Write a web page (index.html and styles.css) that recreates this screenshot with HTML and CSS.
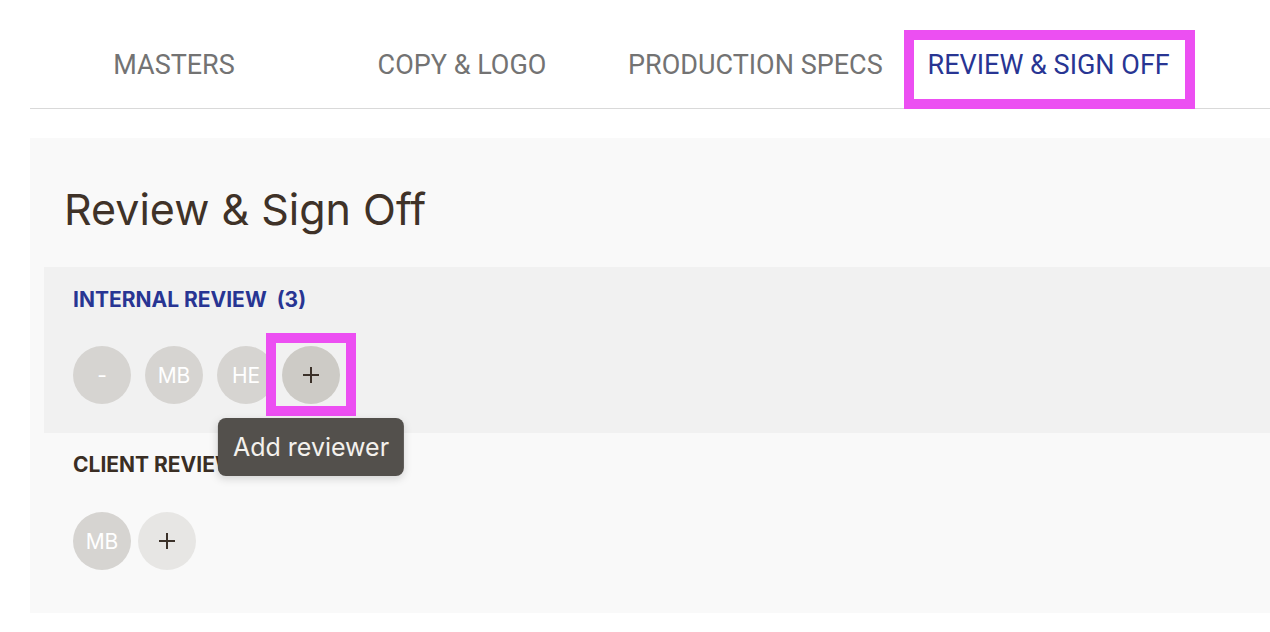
FILE: index.html
```html
<!DOCTYPE html>
<html lang="en">
<head>
<meta charset="utf-8">
<title>Review &amp; Sign Off</title>
<link rel="stylesheet" href="styles.css">
</head>
<body>
<div class="page">
  <nav class="tabs">
    <div class="tab">MASTERS</div>
    <div class="tab">COPY &amp; LOGO</div>
    <div class="tab">PRODUCTION SPECS</div>
    <div class="tab tab-active">REVIEW &amp; SIGN OFF<span class="highlight highlight-tab"></span></div>
  </nav>

  <main class="panel">
    <h1 class="title">Review &amp; Sign Off</h1>

    <section class="review review-internal">
      <h2 class="label label-blue">INTERNAL REVIEW<span class="count">(3)</span></h2>
      <div class="people">
        <div class="avatars">
          <div class="avatar">-</div>
          <div class="avatar">MB</div>
          <div class="avatar">HE</div>
        </div>
        <div class="add add-hover">
          <svg class="plus" viewBox="0 0 18 18" width="18" height="18"><path d="M9 1v16M1 9h16" stroke="#3b3129" stroke-width="2" fill="none"/></svg>
          <span class="highlight highlight-add"></span>
          <div class="tooltip">Add reviewer</div>
        </div>
      </div>
    </section>

    <section class="review review-client">
      <h2 class="label label-dark">CLIENT REVIEW</h2>
      <div class="people">
        <div class="avatars">
          <div class="avatar">MB</div>
        </div>
        <div class="add">
          <svg class="plus" viewBox="0 0 18 18" width="18" height="18"><path d="M9 1v16M1 9h16" stroke="#3b3129" stroke-width="2" fill="none"/></svg>
        </div>
      </div>
    </section>
  </main>
</div>
</body>
</html>
```

FILE: styles.css
```css
* { box-sizing: border-box; }

html, body {
  margin: 0;
  padding: 0;
  background: #ffffff;
  overflow: hidden;
}

.page {
  margin-left: 30px;
  width: calc(100% - 30px);
}

.tabs {
  display: flex;
  padding-top: 30px;
  border-bottom: 1px solid #d9d9d9;
  height: 109px;
}

.tab {
  position: relative;
  min-width: 288px;
  padding: 20px 22px 28px;
  font-family: Roboto, "Liberation Sans", sans-serif;
  font-size: 27px;
  line-height: 30px;
  color: #737373;
  text-align: center;
  white-space: nowrap;
}

.tab-active {
  color: #283593;
}

.highlight {
  position: absolute;
  border: 10px solid #ec4ff2;
  pointer-events: none;
}

.highlight-tab {
  left: -1px;
  top: 0;
  right: -2px;
  bottom: -1px;
}

.panel {
  margin-top: 29px;
  background: #f9f9f9;
  padding: 46px 0 43px 14px;
}

.title {
  margin: 0 0 33px;
  padding-left: 20px;
  font-family: Inter, "Liberation Sans", sans-serif;
  font-weight: 400;
  font-size: 43px;
  line-height: 50px;
  color: #3f3228;
}

.review {
  padding: 21px 0 29px 29px;
}

.review-internal {
  background: #f1f1f1;
}

.review-client {
  padding-top: 20px;
  padding-bottom: 0;
}

.label {
  margin: 0 0 34px;
  font-family: Inter, "Liberation Sans", sans-serif;
  font-weight: 700;
  font-size: 21px;
  line-height: 24px;
}

.review-client .label {
  margin-bottom: 35px;
}

.label-blue { color: #283593; }
.label-dark { color: #3a2e24; }

.count { margin-left: 10px; }

.people {
  display: flex;
  gap: 7px;
}

.avatars {
  display: flex;
  gap: 14px;
}

.avatar,
.add {
  width: 58px;
  height: 58px;
  border-radius: 50%;
  display: flex;
  align-items: center;
  justify-content: center;
  font-family: Inter, "Liberation Sans", sans-serif;
  font-size: 21px;
  color: #ffffff;
}

.avatar {
  background: #d6d4d1;
}

.add {
  position: relative;
  background: #e7e6e4;
}

.add-hover {
  background: #cdcbc6;
}

.highlight-add {
  left: -16px;
  top: -13px;
  width: 90px;
  height: 83px;
}

.tooltip {
  position: absolute;
  z-index: 5;
  top: calc(100% + 14px);
  left: 50%;
  transform: translateX(-50%);
  background: #53504c;
  color: #f3f1ed;
  border-radius: 8px;
  padding: 0 15px;
  height: 58px;
  display: flex;
  align-items: center;
  font-family: Inter, "Liberation Sans", sans-serif;
  font-size: 25px;
  white-space: nowrap;
  box-shadow: 0 3px 8px rgba(0, 0, 0, 0.15);
}
```
